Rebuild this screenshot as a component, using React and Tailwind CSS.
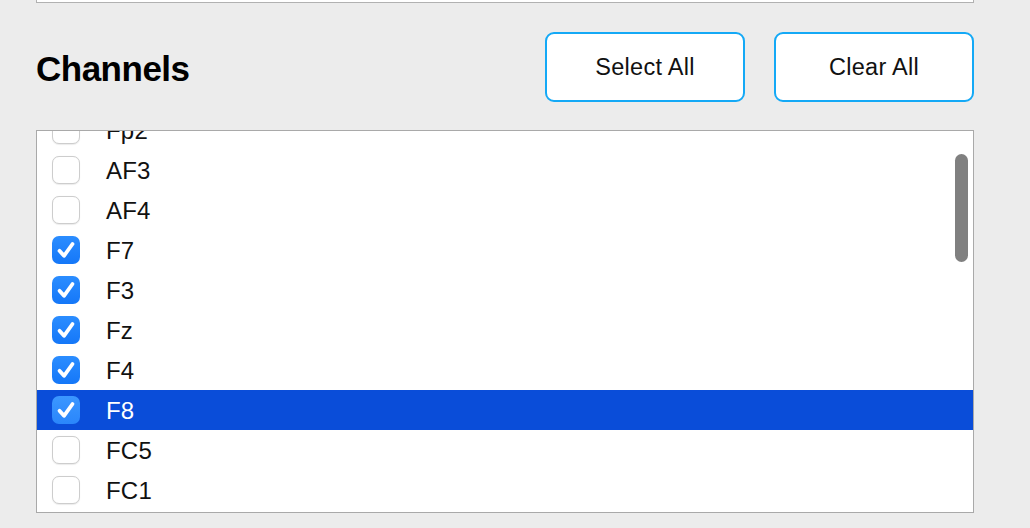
import React from "react";

const rows = [
  { name: "Fp2", checked: false },
  { name: "AF3", checked: false },
  { name: "AF4", checked: false },
  { name: "F7", checked: true },
  { name: "F3", checked: true },
  { name: "Fz", checked: true },
  { name: "F4", checked: true },
  { name: "F8", checked: true, selected: true },
  { name: "FC5", checked: false },
  { name: "FC1", checked: false },
];

function Box({ checked, selected }) {
  if (checked) {
    return (
      <div
        className={
          "w-[28px] h-[28px] rounded-[7px] flex items-center justify-center shrink-0 " +
          (selected
            ? "bg-gradient-to-b from-[#3b97ff] to-[#2a86fb]"
            : "bg-gradient-to-b from-[#2b8dff] to-[#1477f8]")
        }
      >
        <svg width="28" height="28" viewBox="0 0 28 28">
          <path
            d="M7.5 14.8 L12 19.8 L20.5 8"
            fill="none"
            stroke="white"
            strokeWidth="3.8"
            strokeLinecap="round"
            strokeLinejoin="round"
          />
        </svg>
      </div>
    );
  }
  return (
    <div className="w-[28px] h-[28px] rounded-[7px] bg-white border border-[#cdcdcd] shadow-[0_0.5px_1px_rgba(0,0,0,0.08)] shrink-0" />
  );
}

export default function App() {
  return (
    <div
      className="w-[1030px] h-[528px] bg-[#ececec] overflow-hidden"
      style={{ fontFamily: '"Liberation Sans", Arial, sans-serif' }}
    >
      <div className="mx-[36px] w-[938px]">
        <div className="h-[3px] bg-white border-x border-b border-[#b1b1b1]" />
        <div className="mt-[29px] h-[70px] flex items-center justify-between">
          <h1 className="text-[35px] font-bold text-black tracking-[-0.5px] leading-none pt-[3px]">
            Channels
          </h1>
          <div className="flex gap-[29px]">
            <button className="w-[200px] h-[70px] bg-white border-2 border-[#14a9f6] rounded-[9px] text-[23.5px] tracking-[0.3px] text-[#111] pt-[2px]">
              Select All
            </button>
            <button className="w-[200px] h-[70px] bg-white border-2 border-[#14a9f6] rounded-[9px] text-[23.5px] tracking-[0.3px] text-[#111] pt-[2px]">
              Clear All
            </button>
          </div>
        </div>
        <div className="relative mt-[28px] h-[383px] bg-white border border-[#a9a9a9] overflow-hidden">
          <div className="-mt-[21px]">
            {rows.map((r) => (
              <div
                key={r.name}
                className={
                  "h-[40px] flex items-center pl-[15px] " +
                  (r.selected ? "bg-[#0a4dd9] text-white" : "text-[#111]")
                }
              >
                <Box checked={r.checked} selected={r.selected} />
                <span className="ml-[26px] text-[24px] tracking-[0.2px] leading-none pt-[2px]">
                  {r.name}
                </span>
              </div>
            ))}
          </div>
          <div className="absolute right-[5px] top-[23px] w-[13px] h-[108px] rounded-full bg-[#808080]" />
        </div>
      </div>
    </div>
  );
}
